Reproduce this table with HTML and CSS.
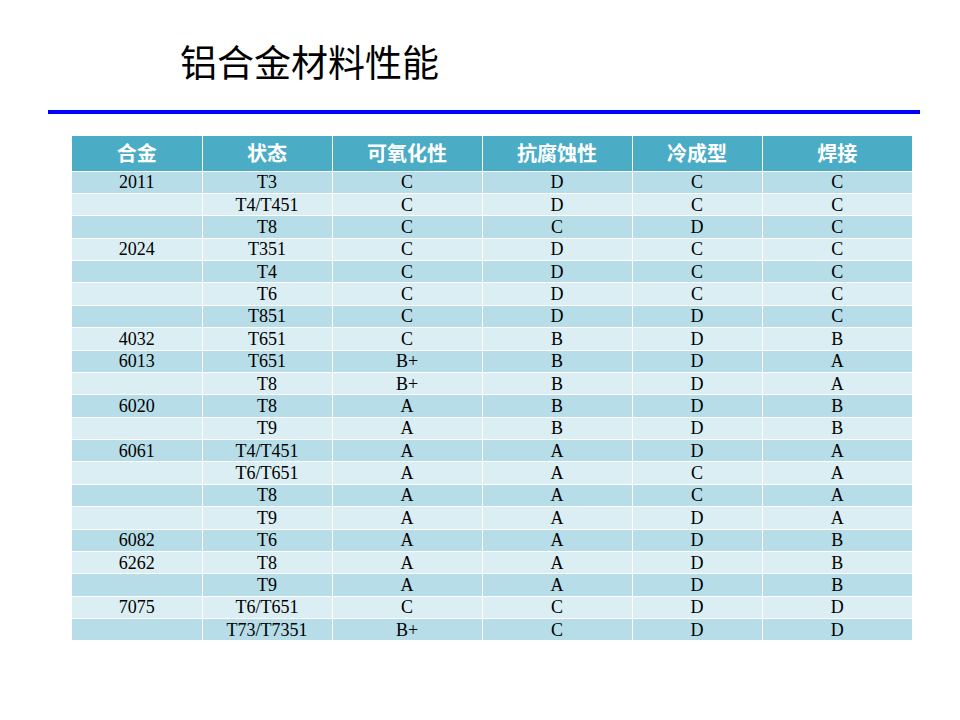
FILE: index.html
```html
<!DOCTYPE html>
<html lang="zh">
<head>
<meta charset="utf-8">
<title>铝合金材料性能</title>
<link rel="stylesheet" href="styles.css">
</head>
<body>
<div class="slide">
  <h1 class="title">铝合金材料性能</h1>
  <div class="rule"></div>
  <table class="grid">
    <colgroup>
      <col class="c1"><col class="c2"><col class="c3"><col class="c4"><col class="c5"><col class="c6">
    </colgroup>
    <thead>
      <tr><th>合金</th><th>状态</th><th>可氧化性</th><th>抗腐蚀性</th><th>冷成型</th><th>焊接</th></tr>
    </thead>
    <tbody>
      <tr><td>2011</td><td>T3</td><td>C</td><td>D</td><td>C</td><td>C</td></tr>
      <tr><td></td><td>T4/T451</td><td>C</td><td>D</td><td>C</td><td>C</td></tr>
      <tr><td></td><td>T8</td><td>C</td><td>C</td><td>D</td><td>C</td></tr>
      <tr><td>2024</td><td>T351</td><td>C</td><td>D</td><td>C</td><td>C</td></tr>
      <tr><td></td><td>T4</td><td>C</td><td>D</td><td>C</td><td>C</td></tr>
      <tr><td></td><td>T6</td><td>C</td><td>D</td><td>C</td><td>C</td></tr>
      <tr><td></td><td>T851</td><td>C</td><td>D</td><td>D</td><td>C</td></tr>
      <tr><td>4032</td><td>T651</td><td>C</td><td>B</td><td>D</td><td>B</td></tr>
      <tr><td>6013</td><td>T651</td><td>B+</td><td>B</td><td>D</td><td>A</td></tr>
      <tr><td></td><td>T8</td><td>B+</td><td>B</td><td>D</td><td>A</td></tr>
      <tr><td>6020</td><td>T8</td><td>A</td><td>B</td><td>D</td><td>B</td></tr>
      <tr><td></td><td>T9</td><td>A</td><td>B</td><td>D</td><td>B</td></tr>
      <tr><td>6061</td><td>T4/T451</td><td>A</td><td>A</td><td>D</td><td>A</td></tr>
      <tr><td></td><td>T6/T651</td><td>A</td><td>A</td><td>C</td><td>A</td></tr>
      <tr><td></td><td>T8</td><td>A</td><td>A</td><td>C</td><td>A</td></tr>
      <tr><td></td><td>T9</td><td>A</td><td>A</td><td>D</td><td>A</td></tr>
      <tr><td>6082</td><td>T6</td><td>A</td><td>A</td><td>D</td><td>B</td></tr>
      <tr><td>6262</td><td>T8</td><td>A</td><td>A</td><td>D</td><td>B</td></tr>
      <tr><td></td><td>T9</td><td>A</td><td>A</td><td>D</td><td>B</td></tr>
      <tr><td>7075</td><td>T6/T651</td><td>C</td><td>C</td><td>D</td><td>D</td></tr>
      <tr><td></td><td>T73/T7351</td><td>B+</td><td>C</td><td>D</td><td>D</td></tr>
    </tbody>
  </table>
</div>
</body>
</html>
```
FILE: styles.css
```css
html, body {
  margin: 0;
  padding: 0;
  background: #ffffff;
}

.slide {
  width: 960px;
  height: 720px;
  overflow: hidden;
  padding-top: 39px;
  box-sizing: border-box;
}

.title {
  margin: 0 0 0 180px;
  font-family: "Noto Sans CJK SC", sans-serif;
  font-weight: 400;
  font-size: 37px;
  line-height: 44px;
  color: #000000;
}

.rule {
  margin: 27px 0 0 48px;
  width: 872px;
  height: 4px;
  background: #0000ff;
}

.grid {
  margin: 22px 0 0 72px;
  width: 840px;
  border-collapse: collapse;
  table-layout: fixed;
}

.c1, .c2, .c5 { width: 130px; }
.c3, .c4, .c6 { width: 150px; }

.grid th,
.grid td {
  border: 1px solid #ffffff;
  padding: 0;
  text-align: center;
  vertical-align: middle;
}

.grid tr > :first-child { border-left: none; }
.grid tr > :last-child { border-right: none; }
.grid thead th { border-top: none; }
.grid tbody tr:last-child td { border-bottom: none; }

.grid th {
  height: 34.5px;
  background: #4bacc6;
  color: #ffffff;
  font-family: "Noto Sans CJK SC", sans-serif;
  font-weight: 700;
  font-size: 20px;
  line-height: 24px;
}

.grid td {
  height: 21.38px;
  font-family: "Liberation Serif", "Noto Sans CJK SC", serif;
  font-size: 18px;
  line-height: 18px;
  color: #000000;
}

.grid tbody tr:nth-child(odd) td { background: #b7dde8; }
.grid tbody tr:nth-child(even) td { background: #dbeef3; }
```
